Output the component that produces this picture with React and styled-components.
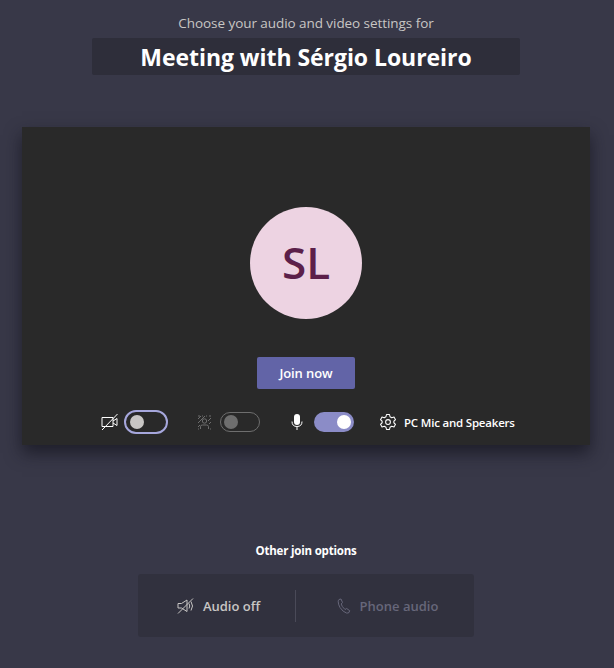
import React from "react";
import styled, { createGlobalStyle } from "styled-components";

const Global = createGlobalStyle`
  html, body { margin: 0; padding: 0; background: #383848; }
  body { font-family: "Open Sans", "Noto Sans", sans-serif; }
`;

const Page = styled.div`
  width: 614px;
  height: 668px;
  box-sizing: border-box;
  background: #383848;
  padding: 14px 2px 0 0;
  display: flex;
  flex-direction: column;
  align-items: center;
  overflow: hidden;
`;
const Subtitle = styled.div`
  height: 18px;
  line-height: 18px;
  font-size: 13.5px;
  color: #c8c6c4;
  letter-spacing: -0.06px;
`;
const TitleBar = styled.h1`
  width: 428px;
  height: 37px;
  margin: 6px 0 0;
  background: #2e2e3a;
  border-radius: 2px;
  color: #fff;
  font-size: 23px;
  font-weight: 700;
  line-height: 38px;
  text-align: center;
  letter-spacing: -0.05px;
`;
const Card = styled.section`
  width: 568px;
  height: 318px;
  margin: 52px 0 0 0;
  box-sizing: border-box;
  background: #292929;
  box-shadow: 0 8px 16px rgba(18, 18, 28, 0.7);
  padding-top: 80px;
  display: flex;
  flex-direction: column;
  align-items: center;
`;
const Avatar = styled.div`
  width: 112px;
  height: 112px;
  border-radius: 50%;
  background: #edd3e2;
  color: #5c1f4a;
  font-size: 44px;
  font-weight: 600;
  line-height: 110px;
  text-align: center;
`;
const JoinButton = styled.button`
  width: 98px;
  height: 32px;
  margin-top: 38px;
  border: 0;
  border-radius: 2px;
  background: #6264a7;
  color: #fff;
  font: 600 13px "Open Sans", sans-serif;
  letter-spacing: -0.1px;
  padding: 0;
`;
const Controls = styled.div`
  align-self: stretch;
  margin-top: 21px;
  height: 24px;
  padding-left: 79px;
  display: flex;
  align-items: center;
`;
const Track = styled.span`
  box-sizing: border-box;
  width: ${(p) => (p.$focus ? "44px" : "40px")};
  height: ${(p) => (p.$focus ? "24px" : "20px")};
  border-radius: 12px;
  margin-left: ${(p) => p.$gap}px;
  display: flex;
  align-items: center;
  justify-content: ${(p) => (p.$on ? "flex-end" : "flex-start")};
  padding: 0 ${(p) => (p.$focus ? "4px" : "3px")};
  background: ${(p) => (p.$on ? "#8b8cc7" : "transparent")};
  border: ${(p) =>
    p.$focus ? "2px solid #a6a7dc" : p.$on ? "0" : `1px solid ${p.$off ? "#6e6e6e" : "#c8c6c4"}`};
`;
const Knob = styled.span`
  width: 14px;
  height: 14px;
  border-radius: 50%;
  background: ${(p) => p.$color};
`;
const DeviceLabel = styled.span`
  margin-left: 7px;
  font-size: 11.5px;
  font-weight: 600;
  color: #fff;
  letter-spacing: -0.2px;
  white-space: nowrap;
`;
const Icon = styled.svg`
  flex: none;
  margin-left: ${(p) => p.$gap || 0}px;
  display: block;
`;
const OptionsTitle = styled.div`
  margin-top: 97px;
  height: 18px;
  line-height: 18px;
  font-size: 11.5px;
  font-weight: 700;
  color: #fff;
  letter-spacing: -0.2px;
`;
const Options = styled.div`
  width: 336px;
  height: 63px;
  margin-top: 14px;
  background: #31313e;
  border-radius: 3px;
  display: flex;
  align-items: center;
`;
const Option = styled.div`
  flex: ${(p) => (p.$disabled ? "1" : "0 0 157px")};
  box-sizing: border-box;
  padding-left: 4px;
  display: flex;
  align-items: center;
  justify-content: center;
  gap: 8px;
  font-size: 13px;
  font-weight: 600;
  line-height: 18px;
  color: ${(p) => (p.$disabled ? "#67677a" : "#c8c6c4")};
`;
const Divider = styled.span`
  width: 1px;
  height: 32px;
  background: #4a4a58;
`;

export default function App() {
  return (
    <Page>
      <Global />
      <Subtitle>Choose your audio and video settings for</Subtitle>
      <TitleBar>Meeting with Sérgio Loureiro</TitleBar>
      <Card>
        <Avatar>SL</Avatar>
        <JoinButton>Join now</JoinButton>
        <Controls>
          <Icon width="18" height="18" viewBox="0 0 18 18" fill="none" stroke="#fff" strokeWidth="1">
            <path d="M1 4.500h11v9H1zM12 8l4-2.500v7L12 10M1 17 16.500 1" />
          </Icon>
          <Track $focus $gap={5}><Knob $color="#c8c6c4" /></Track>
          <Icon $gap={29} width="15" height="15" viewBox="0 0 15 15" fill="none" stroke="#6e6e6e" strokeWidth="1">
            <circle cx="7.500" cy="6" r="2.200" />
            <path d="M3.500 14v-2.500q0-1.500 2-1.500h4q2 0 2 1.500V14M1 1h2M5 1h1M9 1h1M12 1h2M1 4l3-3M1 8l7-7M11 6l3-3M12 9l2-2M1 12l2-2M1 14h1M13 14h1" />
          </Icon>
          <Track $off $gap={8}><Knob $color="#6e6e6e" /></Track>
          <Icon $gap={30} width="14" height="18" viewBox="0 0 14 18" fill="none">
            <rect x="4" y="1" width="6" height="11" rx="3" fill="#fff" />
            <path d="M2 8.500q0 5 5 5t5-5M7 13.500V17" stroke="#fff" strokeWidth="1" />
          </Icon>
          <Track $on $gap={10}><Knob $color="#fff" /></Track>
          <Icon $gap={25} width="18" height="18" viewBox="0 0 24 24" fill="none" stroke="#fff" strokeWidth="1.400" strokeLinejoin="round">
            <circle cx="12" cy="12" r="3.200" />
            <path d="M10 2h4l.7 3 2.300 1.300 3-.9 2 3.500-2.200 2.100v2l2.200 2.100-2 3.500-3-.9L14.700 19 14 22h-4l-.7-3L7 17.700l-3 .9-2-3.500 2.200-2.100v-2L2 8.900l2-3.500 3 .9L9.300 5z" />
          </Icon>
          <DeviceLabel>PC Mic and Speakers</DeviceLabel>
        </Controls>
      </Card>
      <OptionsTitle>Other join options</OptionsTitle>
      <Options>
        <Option>
          <Icon width="18" height="18" viewBox="0 0 18 18" fill="none" stroke="#c8c6c4" strokeWidth="1">
            <path d="M1 6.500h3.500L10 3v11.500L4.500 11H1zM12 6.500q1.500 2.500 0 5M14 4.500q3 4.500 0 9M1 16.500 16 1.500" />
          </Icon>
          Audio off
        </Option>
        <Divider />
        <Option $disabled>
          <Icon width="16" height="16" viewBox="0 0 16 16" fill="none" stroke="#67677a" strokeWidth="1">
            <path d="M3 1.500 5 1l1.500 3.500L5.200 6q.5 2.500 3.800 5.500l1.700-1 3 2.200-.7 1.800q-1 .8-2.500.5-3.500-1-6.500-5.500Q2 6 2.200 3.200 2.400 2 3 1.500z" />
          </Icon>
          Phone audio
        </Option>
      </Options>
    </Page>
  );
}
